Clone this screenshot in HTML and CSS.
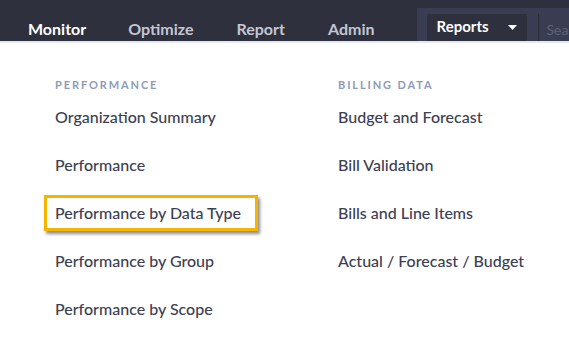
FILE: index.html
```html
<!DOCTYPE html>
<html>
<head>
<meta charset="utf-8">
<link rel="stylesheet" href="styles.css">
</head>
<body>
<header class="topbar">
  <nav class="nav">
    <a class="nav-item active">Monitor</a>
    <a class="nav-item">Optimize</a>
    <a class="nav-item">Report</a>
    <a class="nav-item">Admin</a>
  </nav>
  <div class="tools">
    <div class="select">
      <span>Reports</span>
      <svg class="caret" width="9" height="5" viewBox="0 0 9 5"><path d="M0 0h9L4.5 5z" fill="#fff"/></svg>
    </div>
    <div class="divider"></div>
    <div class="search">Search</div>
  </div>
</header>
<main class="menu">
  <section class="col col-perf">
    <h3 class="col-title">PERFORMANCE</h3>
    <ul class="links">
      <li><a>Organization Summary</a></li>
      <li><a>Performance</a></li>
      <li><a class="highlight">Performance by Data Type</a></li>
      <li><a>Performance by Group</a></li>
      <li><a>Performance by Scope</a></li>
    </ul>
  </section>
  <section class="col col-bill">
    <h3 class="col-title">BILLING DATA</h3>
    <ul class="links">
      <li><a>Budget and Forecast</a></li>
      <li><a>Bill Validation</a></li>
      <li><a>Bills and Line Items</a></li>
      <li><a>Actual / Forecast / Budget</a></li>
    </ul>
  </section>
</main>
</body>
</html>
```
FILE: styles.css
```css
html, body {
  margin: 0;
  padding: 0;
  background: #fff;
  font-family: "Lato", "Open Sans", sans-serif;
}
.topbar {
  height: 41px;
  background: #2e303e;
  border-bottom: 2px solid #e4e6f2;
  display: flex;
  align-items: stretch;
  overflow: hidden;
}
.nav {
  display: flex;
  align-items: flex-end;
  padding-left: 28px;
}
.nav-item {
  font-size: 16px;
  font-weight: 700;
  color: #c3c6d3;
  padding-bottom: 2px;
  line-height: 20px;
  margin-right: 43px;
}
.nav-item.active { color: #fff; margin-right: 42px; }
.tools {
  margin-left: -1px;
  margin-top: 8px;
  flex: 1;
  min-width: 0;
  background: #3a3d52;
  display: flex;
  align-items: stretch;
  padding-left: 10px;
  overflow: hidden;
}
.select {
  margin-top: 6px;
  width: 100px;
  flex: none;
  box-sizing: border-box;
  background: #2e303e;
  border-radius: 3px 3px 0 0;
  display: flex;
  align-items: center;
  justify-content: space-between;
  padding: 0 10px 3px 10px;
  color: #fff;
  font-size: 15px;
  font-weight: 700;
}
.caret { margin-top: 2px; }
.divider {
  width: 1px;
  flex: none;
  background: #2a2c38;
  margin-left: 11px;
  margin-top: 6px;
}
.search {
  margin-left: 8px;
  padding-top: 13px;
  color: #5d6177;
  font-size: 14px;
  white-space: nowrap;
}
.menu {
  display: flex;
  padding: 35px 0 0 55px;
}
.col-perf { width: 283px; }
.col-title {
  margin: 0 0 15px 0;
  font-size: 11px;
  font-weight: 700;
  letter-spacing: 1.9px;
  color: #8e9bb8;
  line-height: 14px;
}
.links {
  list-style: none;
  margin: 0;
  padding: 0;
  display: flex;
  flex-direction: column;
  gap: 28px;
}
.links a {
  display: inline-block;
  font-size: 16px;
  line-height: 20px;
  color: #3c4053;
  font-weight: 500;
}
.links a.highlight {
  position: relative;
}
.links a.highlight::before {
  content: "";
  position: absolute;
  left: -11px;
  top: -8px;
  right: -17px;
  bottom: -8px;
  border: 3px solid #f4b400;
  box-shadow: 2px 3px 3px rgba(0,0,0,0.45);
}
```
